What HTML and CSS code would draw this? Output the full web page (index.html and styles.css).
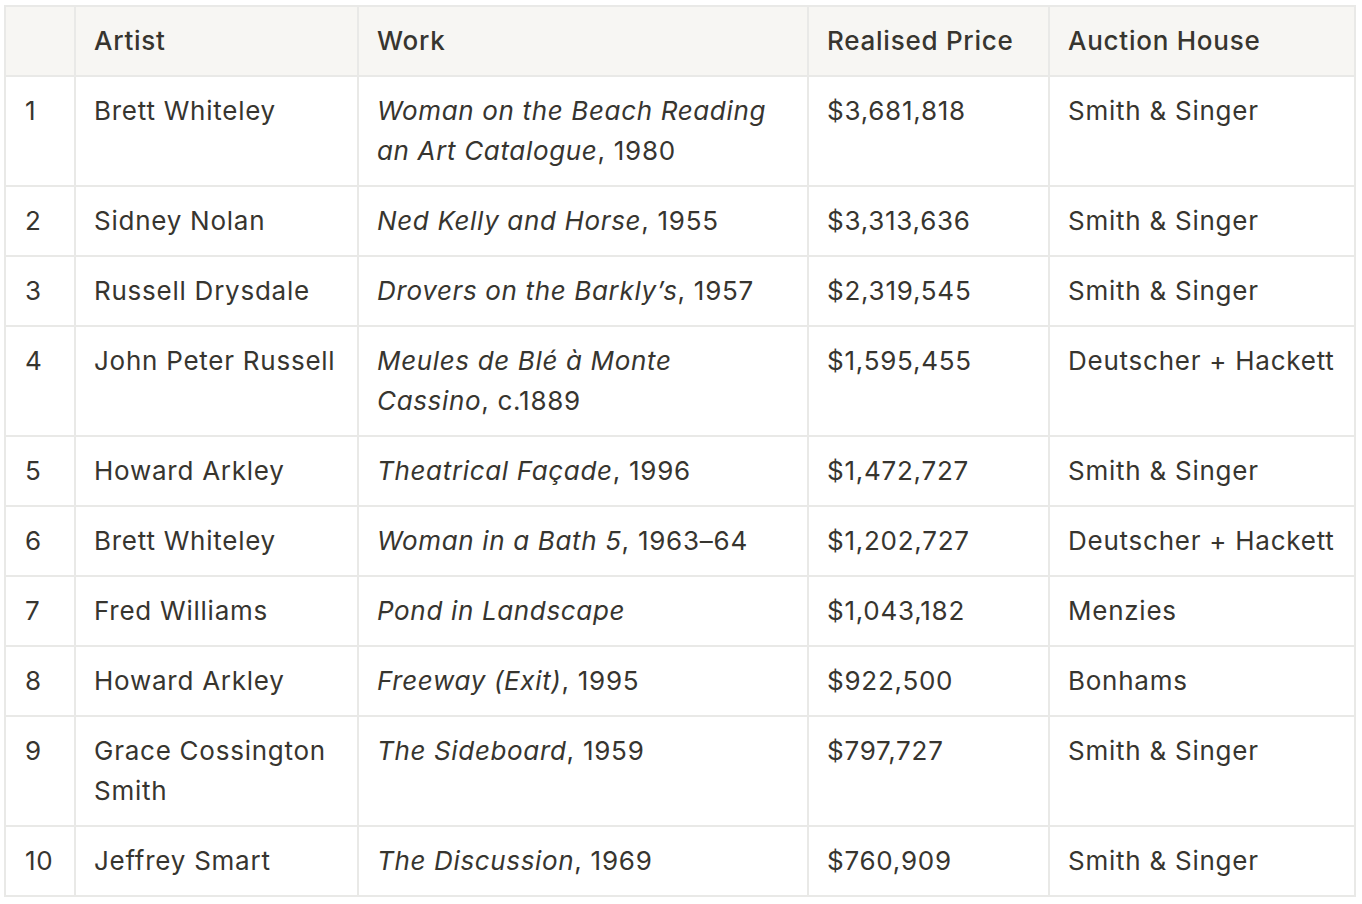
FILE: index.html
```html
<!DOCTYPE html>
<html lang="en">
<head>
<meta charset="utf-8">
<title>Top 10 Auction Results</title>
<link rel="stylesheet" href="styles.css">
</head>
<body>
<table class="results">
  <colgroup>
    <col class="c-rank">
    <col class="c-artist">
    <col class="c-work">
    <col class="c-price">
    <col class="c-house">
  </colgroup>
  <thead>
    <tr>
      <th></th>
      <th>Artist</th>
      <th>Work</th>
      <th>Realised Price</th>
      <th>Auction House</th>
    </tr>
  </thead>
  <tbody>
    <tr><td>1</td><td>Brett Whiteley</td><td><em>Woman on the Beach Reading an Art Catalogue</em>, 1980</td><td>$3,681,818</td><td>Smith &amp; Singer</td></tr>
    <tr><td>2</td><td>Sidney Nolan</td><td><em>Ned Kelly and Horse</em>, 1955</td><td>$3,313,636</td><td>Smith &amp; Singer</td></tr>
    <tr><td>3</td><td>Russell Drysdale</td><td><em>Drovers on the Barkly’s</em>, 1957</td><td>$2,319,545</td><td>Smith &amp; Singer</td></tr>
    <tr><td>4</td><td>John Peter Russell</td><td><em>Meules de Blé à Monte Cassino</em>, c.1889</td><td>$1,595,455</td><td>Deutscher + Hackett</td></tr>
    <tr><td>5</td><td>Howard Arkley</td><td><em>Theatrical Façade</em>, 1996</td><td>$1,472,727</td><td>Smith &amp; Singer</td></tr>
    <tr><td>6</td><td>Brett Whiteley</td><td><em>Woman in a Bath 5</em>, 1963–64</td><td>$1,202,727</td><td>Deutscher + Hackett</td></tr>
    <tr><td>7</td><td>Fred Williams</td><td><em>Pond in Landscape</em></td><td>$1,043,182</td><td>Menzies</td></tr>
    <tr><td>8</td><td>Howard Arkley</td><td><em>Freeway (Exit)</em>, 1995</td><td>$922,500</td><td>Bonhams</td></tr>
    <tr><td>9</td><td>Grace Cossington Smith</td><td><em>The Sideboard</em>, 1959</td><td>$797,727</td><td>Smith &amp; Singer</td></tr>
    <tr><td>10</td><td>Jeffrey Smart</td><td><em>The Discussion</em>, 1969</td><td>$760,909</td><td>Smith &amp; Singer</td></tr>
  </tbody>
</table>
</body>
</html>
```
FILE: styles.css
```css
html, body {
  margin: 0;
  padding: 0;
  background: #ffffff;
}

body {
  font-family: Inter, "Noto Sans", "Liberation Sans", sans-serif;
  font-size: 26px;
  line-height: 40px;
  letter-spacing: 0.75px;
  color: #37352f;
}

.results {
  margin: 5px 0 0 4px;
  width: 1352px;
  table-layout: fixed;
  border-collapse: separate;
  border-spacing: 2px;
  background: #e9e9e7;
}

.c-rank { width: 68px; }
.c-artist { width: 281px; }
.c-work { width: 448px; }
.c-price { width: 239px; }
.c-house { width: 304px; }

.results th,
.results td {
  padding: 14px 18px;
  text-align: left;
  vertical-align: top;
  background: #ffffff;
  font-weight: 400;
}

.results th {
  background: #f7f6f3;
  font-weight: 500;
}

.results td:first-child {
  padding-left: 19px;
  padding-right: 6px;
}

.results em {
  font-style: italic;
  letter-spacing: 0.65px;
}
```
